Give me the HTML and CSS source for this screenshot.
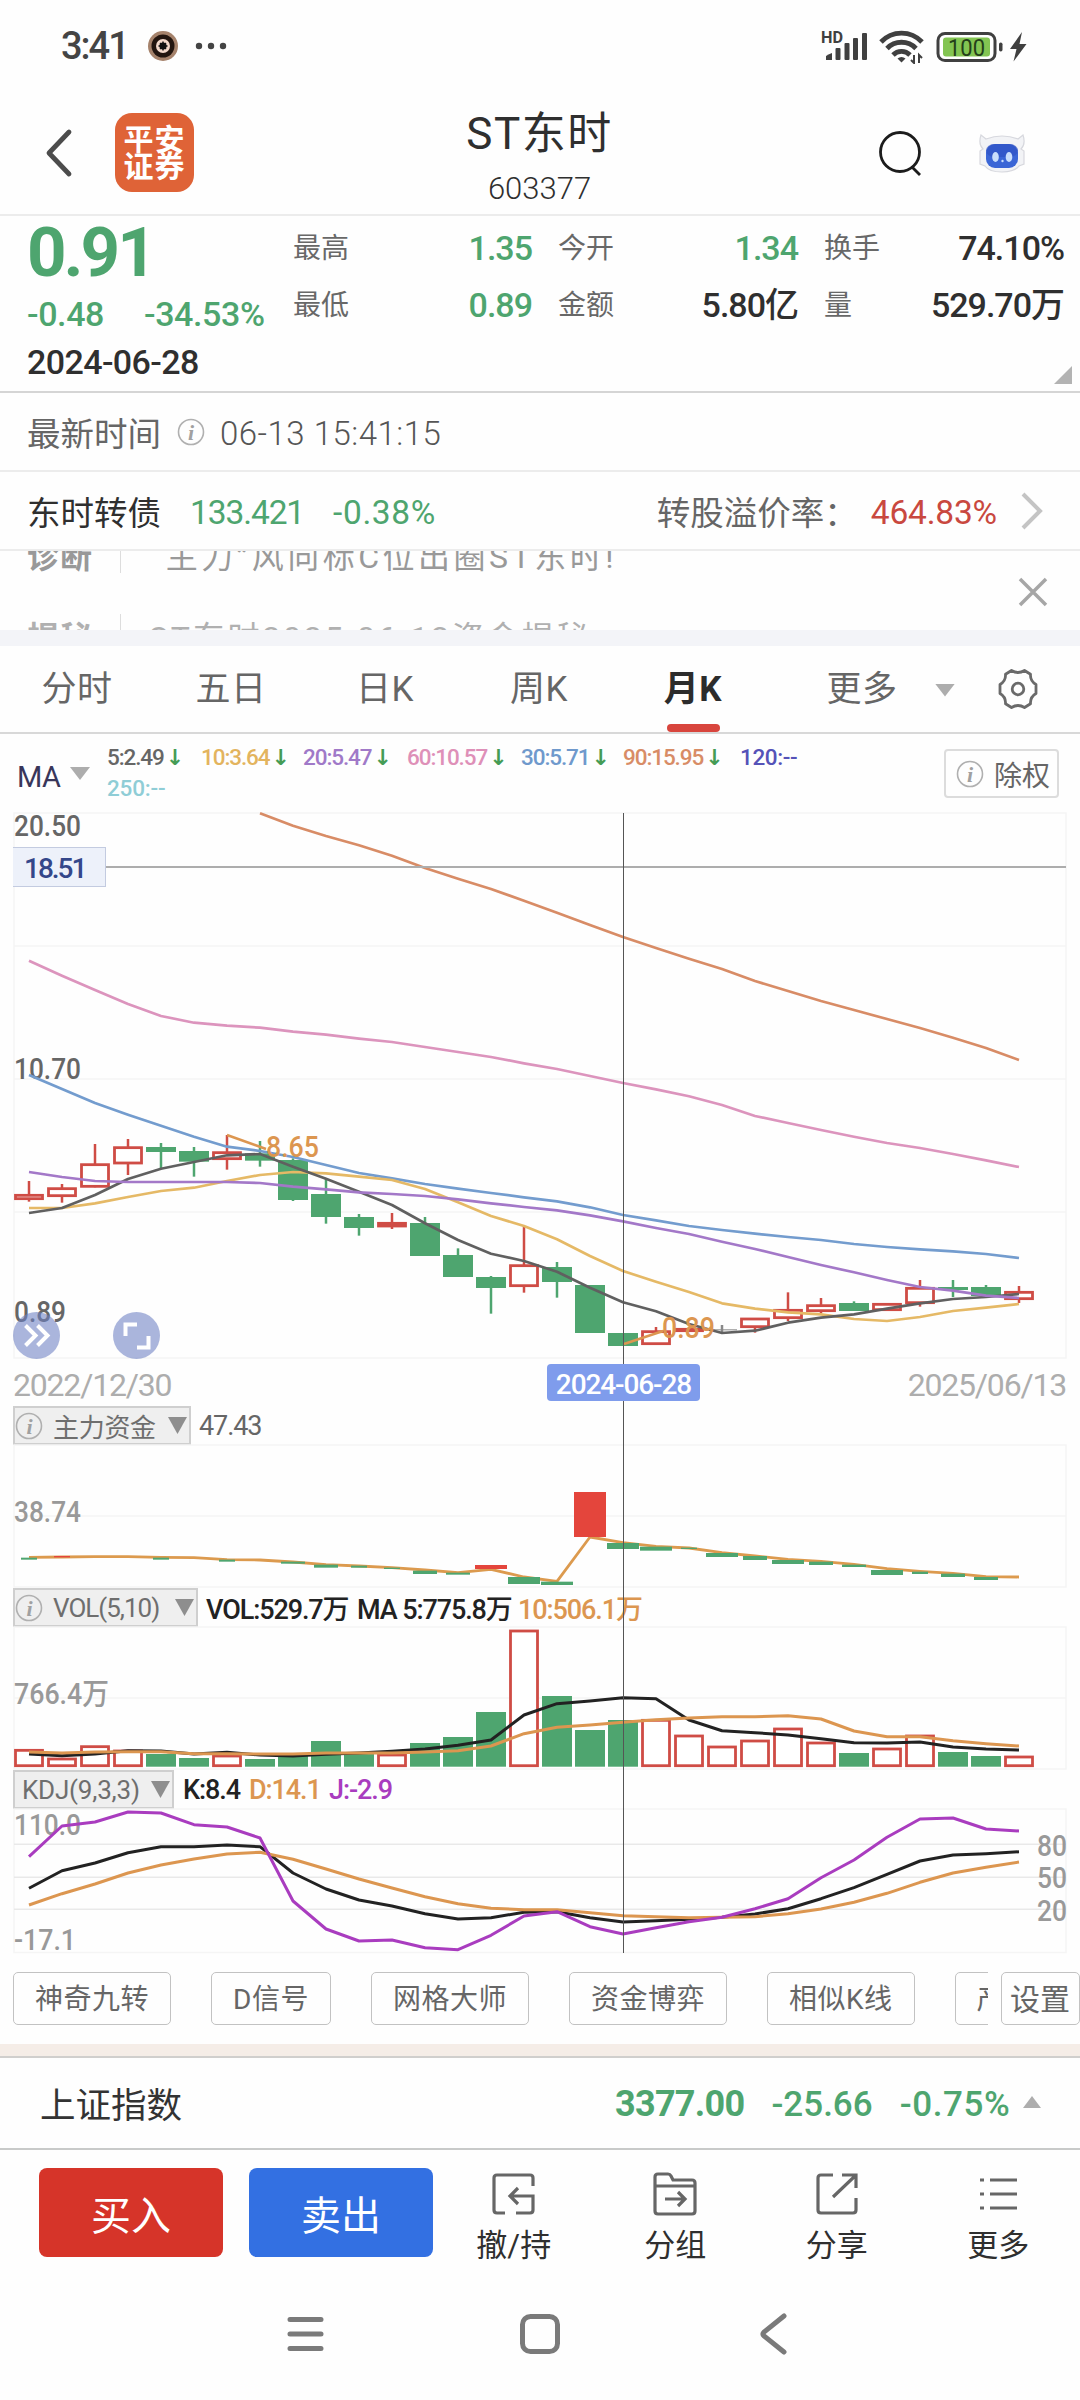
FILE: index.html
```html
<!DOCTYPE html>
<html lang="zh-CN">
  <head>
    <meta charset="utf-8" />
    <title>ST东时 603377</title>
    <link rel="stylesheet" href="styles.css">
  </head>
  <body>
    <!-- Status bar -->
    <div class="status-bar">
      <span class="clock">3:41</span>
      <svg class="status-app" width="30" height="30" viewBox="0 0 30 30">
        <circle cx="15" cy="15" r="15" fill="#a5826b" />
        <circle cx="15" cy="15" r="11.5" fill="#22150f" />
        <circle cx="15" cy="15" r="7" fill="#f3d9cb" />
        <circle cx="15" cy="15" r="3.6" fill="#111" />
        <path d="M15 10.5v9M10.5 15h9M12 12l6 6M18 12l-6 6" stroke="#111" stroke-width="1.4" />
      </svg>
      <svg class="status-dots" width="32" height="8" viewBox="0 0 32 8" fill="#444">
        <circle cx="4" cy="4" r="3.2" /><circle cx="16" cy="4" r="3.2" /><circle cx="28" cy="4" r="3.2" />
      </svg>
      <svg class="status-icons" width="212" height="36" viewBox="0 0 212 36">
        <text x="0" y="15" class="hd" textLength="22" lengthAdjust="spacingAndGlyphs">HD</text>
        <g fill="#404040">
          <path d="M5 28q3-2 6-3v7H5z" />
          <rect x="14.5" y="20" width="5" height="12" rx="1" />
          <rect x="23.5" y="15" width="5" height="17" rx="1" />
          <rect x="32" y="10" width="5" height="22" rx="1" />
          <rect x="41" y="5" width="5" height="27" rx="1" />
        </g>
        <g fill="none" stroke="#404040" stroke-width="4.8">
          <path d="M60 14a28 28 0 0 1 41 0" />
          <path d="M66 20.5a20 20 0 0 1 29 0" />
          <path d="M72 27a12 12 0 0 1 17 0" />
        </g>
        <path d="M80.500 34.500l-4-4a6 6 0 0 1 8 0z" fill="#404040" />
        <path d="M93 27v8l-3-3M98 35v-8l3 3" fill="none" stroke="#404040" stroke-width="2" />
        <rect x="117" y="5.500" width="57" height="27" rx="7" fill="#fff" stroke="#404040" stroke-width="3" />
        <rect x="122" y="9.500" width="47" height="19" rx="3" fill="#83c552" />
        <text x="127" y="27.5" class="battery-text" textLength="37" lengthAdjust="spacingAndGlyphs">100</text>
        <rect x="178" y="14.500" width="3.500" height="9" rx="1.700" fill="#404040" />
        <path d="M201 4l-12 17h6.500l-3 12.500L205.500 16h-7z" fill="#404040" />
      </svg>
    </div>

    <!-- Title bar -->
    <div class="title-bar">
      <svg class="back" width="30" height="50" viewBox="0 0 30 50">
        <path d="M26 4L6 25l20 21" fill="none" stroke="#4c4c4c" stroke-width="4.800" stroke-linecap="round" stroke-linejoin="round" />
      </svg>
      <div class="broker-logo"><span>平安</span><span>证券</span></div>
      <div class="title">
        <h1>ST东时</h1>
        <p>603377</p>
      </div>
      <svg class="search" width="44" height="48" viewBox="0 0 44 48" fill="none" stroke="#1c1c1c" stroke-width="2.800">
        <circle cx="22" cy="23" r="19.500" /><path d="M34 38l8 8" />
      </svg>
      <svg class="robot" width="48" height="40" viewBox="0 0 48 40">
        <path d="M3 2q-3 9 2 14L2 18v13l5 2q4 6 17 6t17-6l5-2V18l-3-2q5-5 2-14l-5 4q-8-3-16-3T8 6z" fill="#f2f3f6" stroke="#d7d8de" stroke-width="1.200" />
        <rect x="8" y="11" width="32" height="24" rx="9" fill="#3b66d6" />
        <rect x="8" y="11" width="32" height="13" rx="8" fill="#2f53c4" opacity=".7" />
        <ellipse cx="17.500" cy="24" rx="3.300" ry="5" fill="#c9defc" />
        <ellipse cx="31" cy="24" rx="3.300" ry="5" fill="#c9defc" />
        <circle cx="24.500" cy="28" r="1.200" fill="#c9defc" />
      </svg>
    </div>

    <!-- Quote summary -->
    <div class="quote">
      <div class="quote-main">
        <div class="price">0.91</div>
        <div class="change"><span>-0.48</span><span>-34.53%</span></div>
        <div class="quote-date">2024-06-28</div>
      </div>
      <dl class="quote-grid">
        <dt>最高</dt><dd class="green">1.35</dd>
        <dt>今开</dt><dd class="green">1.34</dd>
        <dt>换手</dt><dd>74.10%</dd>
        <dt>最低</dt><dd class="green">0.89</dd>
        <dt>金额</dt><dd>5.80亿</dd>
        <dt>量</dt><dd>529.70万</dd>
      </dl>
      <i class="corner"></i>
    </div>

    <div class="row time-row">
      <span class="row-label gray">最新时间</span>
      <svg class="info" width="28" height="28" viewBox="0 0 28 28"><circle cx="14" cy="14" r="12.500" /><text x="14" y="21.500">i</text></svg>
      <span class="row-time">06-13 15:41:15</span>
    </div>

    <div class="row bond-row">
      <span class="row-label">东时转债</span>
      <span class="row-num green bond-price">133.421</span>
      <span class="row-num green bond-pct">-0.38%</span>
      <span class="row-label gray premium">转股溢价率：</span>
      <span class="row-num red">464.83%</span>
      <svg class="arrow" width="24" height="40" viewBox="0 0 24 40"><path d="M3 3l17 17L3 37" fill="none" stroke="#c4c4c4" stroke-width="4" /></svg>
    </div>

    <!-- Rolling news, caught between two items -->
    <div class="ticker">
      <div class="ticker-list">
        <div class="ticker-item"><b>诊断</b><span class="quoted">“主力”风向标C位出圈ST东时!</span></div>
        <div class="ticker-item next"><b>揭秘</b><span>ST东时2025-06-12资金揭秘</span></div>
      </div>
      <svg class="close" width="30" height="30" viewBox="0 0 30 30"><path d="M2 2l26 26M28 2L2 28" stroke="#a6a6a6" stroke-width="3.500" /></svg>
    </div>

    <!-- Period tabs -->
    <div class="tabs">
      <span class="tab">分时</span>
      <span class="tab">五日</span>
      <span class="tab">日K</span>
      <span class="tab">周K</span>
      <span class="tab active">月K</span>
      <span class="tab more">更多</span>
      <i class="triangle"></i>
      <svg class="gear" width="40" height="42" viewBox="0 0 40 42" fill="none" stroke="#6a6a6a" stroke-width="2.800">
        <path d="M13.500 2.500q6.500 4 13 0l6 3.800q-.5 6.700 5.500 10.200v9q-6 3.500-5.500 10.200l-6 3.800q-6.500-4-13 0l-6-3.800Q8 29 2 25.500v-9Q8 13 7.500 6.300z" stroke-linejoin="round" />
        <circle cx="20" cy="21" r="5.800" />
      </svg>
    </div>

    <!-- MA legend -->
    <div class="ma-bar">
      <span class="ma-name">MA</span>
      <i class="triangle"></i>
      <div class="ma-list">
        <span class="ma5">5:2.49<b>↓</b></span>
        <span class="ma10">10:3.64<b>↓</b></span>
        <span class="ma20">20:5.47<b>↓</b></span>
        <span class="ma60">60:10.57<b>↓</b></span>
        <span class="ma30">30:5.71<b>↓</b></span>
        <span class="ma90">90:15.95<b>↓</b></span>
        <span class="ma120">120:--</span>
        <span class="ma250">250:--</span>
      </div>
      <span class="rights">
        <svg class="info" width="28" height="28" viewBox="0 0 28 28"><circle cx="14" cy="14" r="12.500" /><text x="14" y="21.500">i</text></svg>除权
      </span>
    </div>

    <!-- Charts -->
    <div class="charts">
      <svg id="kline" class="panel" width="1052" height="546"></svg>
      <div class="dates"><span>2022/12/30</span><span>2025/06/13</span></div>

      <div class="indicator">
        <span class="picker fund-picker">
          <svg class="info" width="28" height="28" viewBox="0 0 28 28"><circle cx="14" cy="14" r="12.500" /><text x="14" y="21.500">i</text></svg>
          <em>主力资金</em><i class="triangle"></i>
        </span>
        <span class="gray fund-value">47.43</span>
      </div>
      <svg id="fund" class="panel" width="1052" height="143"></svg>

      <div class="indicator">
        <span class="picker vol-picker">
          <svg class="info" width="28" height="28" viewBox="0 0 28 28"><circle cx="14" cy="14" r="12.500" /><text x="14" y="21.500">i</text></svg>
          <em>VOL(5,10)</em><i class="triangle"></i>
        </span>
        <span class="vol-now">VOL:529.7万</span><span class="vol-ma5">MA 5:775.8万</span><span class="orange">10:506.1万</span>
      </div>
      <svg id="vol" class="panel" width="1052" height="143"></svg>

      <div class="indicator">
        <span class="picker kdj-picker"><em>KDJ(9,3,3)</em><i class="triangle"></i></span>
        <span class="k">K:8.4</span><span class="d orange">D:14.1</span><span class="violet">J:-2.9</span>
      </div>
      <svg id="kdj" class="panel" width="1052" height="144"></svg>

      <div class="cross-x"></div>
      <div class="cross-y"></div>
      <div class="cross-price">18.51</div>
      <div class="cross-date">2024-06-28</div>
      <svg class="round-btn" width="47" height="47" viewBox="0 0 47 47">
        <circle cx="23.500" cy="23.500" r="23.500" fill="#6c80c3" opacity=".58" />
        <path d="M12.500 13.500l10 10-10 10M24.500 13.500l10 10-10 10" fill="none" stroke="#fff" stroke-width="4" />
      </svg>
      <svg class="round-btn full" width="47" height="47" viewBox="0 0 47 47">
        <circle cx="23.500" cy="23.500" r="23.500" fill="#6c80c3" opacity=".58" />
        <path d="M12.500 24V12.500H24M35.500 24v11.500H24" fill="none" stroke="#fff" stroke-width="4" />
      </svg>
    </div>

    <div class="chips">
      <div class="chip-list">
        <span class="chip">神奇九转</span>
        <span class="chip">D信号</span>
        <span class="chip">网格大师</span>
        <span class="chip">资金博弈</span>
        <span class="chip">相似K线</span>
        <span class="chip">产</span>
      </div>
      <span class="chip setting">设置</span>
    </div>

    <!-- Index bar -->
    <div class="index-bar">
      <span class="index-name">上证指数</span>
      <b>3377.00</b>
      <span class="index-num">-25.66</span>
      <span class="index-num pct">-0.75%</span>
      <i class="triangle up"></i>
    </div>

    <!-- Trade actions -->
    <div class="actions">
      <button class="btn buy">买入</button>
      <button class="btn sell">卖出</button>
      <div class="action">
        <svg width="44" height="44" viewBox="0 0 44 44"><path d="M41 14V6q0-3-3-3H5Q2 3 2 6v32q0 3 3 3h8M24 41h14q3 0 3-3V24H19M26 16l-8 8 8 8" /></svg>
        <span>撤/持</span>
      </div>
      <div class="action">
        <svg width="44" height="44" viewBox="0 0 44 44"><path d="M2 14V5q0-3 3-3h10q2 0 3 2l2 4h19q3 0 3 3v28q0 3-3 3H5q-3 0-3-3V14h40M12 27h19M25 20l7 7-7 7" /></svg>
        <span>分组</span>
      </div>
      <div class="action">
        <svg width="44" height="44" viewBox="0 0 44 44"><path d="M18 3H6Q3 3 3 6v32q0 3 3 3h32q3 0 3-3V26M27 3h14v13M40 4L18 25" /></svg>
        <span>分享</span>
      </div>
      <div class="action">
        <svg width="44" height="44" viewBox="0 0 44 44"><path d="M4 8h4M14 8h27M4 22h4M14 22h27M4 36h4M14 36h27" /></svg>
        <span>更多</span>
      </div>
    </div>

    <!-- System navigation -->
    <div class="nav">
      <svg width="42" height="42" viewBox="0 0 42 42"><path d="M6 6.500h31M6 21h31M6 35.500h31" /></svg>
      <svg width="42" height="42" viewBox="0 0 42 42"><rect x="3.500" y="3.500" width="35" height="35" rx="8" /></svg>
      <svg width="42" height="42" viewBox="0 0 42 42"><path d="M30 3L10 19q-2 2 0 4l20 16" /></svg>
    </div>

    <script src="chart.js"></script>
  </body>
</html>
```

FILE: styles.css
```css
* {
  margin: 0;
  padding: 0;
  box-sizing: border-box;
}

body {
  width: 1080px;
  height: 2400px;
  overflow: hidden;
  background: #fefefe;
  color: #2f2f2f;
  font-family: Roboto, "Noto Sans CJK SC", sans-serif;
}

svg {
  display: block;
  flex: none;
}

i, em {
  font-style: normal;
}

.green { color: #4ea56f; }
.red { color: #c9483f; }
.orange { color: #dc9650; }
.violet { color: #a93cbf; }
.gray { color: #666; }

.triangle {
  width: 20px;
  height: 13px;
  background: #adadad;
  clip-path: polygon(0 0, 100% 0, 50% 100%);
}

.triangle.up {
  clip-path: polygon(50% 0, 100% 100%, 0 100%);
}

.info circle {
  fill: none;
  stroke: #b0b0b0;
  stroke-width: 1.6;
}

.info text {
  font: italic bold 22px "Liberation Serif", serif;
  fill: #a0a0a0;
  text-anchor: middle;
}

/* status bar */
.status-bar {
  height: 92px;
  display: flex;
  align-items: center;
  padding-left: 61px;
}

.clock {
  font-size: 38px;
  font-weight: 500;
  letter-spacing: -2px;
  color: #444;
  width: 87px;
}

.status-dots { margin-left: 17px; }
.status-icons { margin-left: 594px; }

.hd {
  font: 700 16px Roboto, sans-serif;
  fill: #404040;
}

.battery-text {
  font: 400 24px Roboto, sans-serif;
  fill: #24401a;
}

/* title bar */
.title-bar {
  height: 124px;
  display: flex;
  align-items: center;
  padding: 0 54px 0 43px;
  border-bottom: 2px solid #ececec;
}

.broker-logo {
  margin: -1px 0 0 42px;
  width: 79px;
  height: 79px;
  padding-top: 1px;
  border-radius: 17px;
  background: #df6337;
  color: #fff;
  font-size: 30px;
  font-weight: 700;
  line-height: 27.5px;
  letter-spacing: 1px;
  display: flex;
  flex-direction: column;
  align-items: center;
  justify-content: center;
}

.title {
  flex: 1;
  text-align: center;
  padding: 16px 0 0 7px;
}

.title h1 {
  font-size: 44px;
  font-weight: 400;
  line-height: 56px;
  letter-spacing: 1.5px;
}

.title p {
  font-size: 31px;
  font-weight: 300;
  line-height: 54px;
}

.search { margin-right: 56px; }

/* quote */
.quote {
  position: relative;
  height: 177px;
  display: flex;
  border-bottom: 2px solid #d5d5d5;
}

.quote-main {
  width: 293px;
  padding-left: 27px;
  font-weight: 500;
}

.price {
  color: #4ea56f;
  font-size: 69px;
  font-weight: 700;
  line-height: 74px;
  letter-spacing: -3px;
}

.change {
  color: #4ea56f;
  font-size: 34px;
  line-height: 48px;
  display: flex;
  letter-spacing: -0.4px;
}

.change span:first-child {
  width: 117px;
}

.quote-date {
  font-size: 34px;
  line-height: 48px;
  letter-spacing: -0.6px;
}

.quote-grid {
  height: 118px;
  padding-top: 4px;
  display: grid;
  grid-template-columns: 80px 159px 106px 160px 106px 160px;
  grid-template-rows: 57px 57px;
  line-height: 57px;
}

.quote-grid dt {
  font-size: 28px;
  color: #686868;
}

.quote-grid dt:nth-of-type(3n + 2),
.quote-grid dt:nth-of-type(3n) {
  padding-left: 26px;
}

.quote-grid dd {
  font-size: 34px;
  font-weight: 500;
  text-align: right;
  letter-spacing: -1px;
  white-space: nowrap;
}

.corner {
  position: absolute;
  right: 8px;
  bottom: 7px;
  width: 18px;
  height: 18px;
  background: #b3b3b3;
  clip-path: polygon(100% 0, 100% 100%, 0 100%);
}

/* info rows */
.row {
  height: 79px;
  padding-left: 27px;
  display: flex;
  align-items: center;
  border-bottom: 2px solid #ececec;
  white-space: nowrap;
}

.row-label {
  font-size: 33.5px;
}

.time-row .info { margin: 0 15px 0 16px; }

.row-time {
  padding-top: 3px;
  font-size: 33px;
  font-weight: 300;
  letter-spacing: 0.5px;
  color: #555;
}

.row-num {
  padding-top: 4px;
  font-size: 33.5px;
  letter-spacing: -0.2px;
}

.bond-price {
  margin: 0 29px 0 29px;
  letter-spacing: -1.1px;
}

.bond-pct { letter-spacing: 0.6px; }

.premium {
  width: 214px;
  margin-left: 221px;
}

.arrow { margin-left: 23px; }

.ticker {
  height: 79px;
  position: relative;
  overflow: hidden;
  color: #999;
  font-size: 32px;
}

.ticker-list {
  margin-top: -18px;
}

.ticker-item {
  height: 81px;
  line-height: 48px;
  letter-spacing: 2.8px;
  white-space: nowrap;
  display: flex;
  align-items: flex-start;
  padding-left: 27px;
}

.ticker-item b {
  width: 94px;
  height: 40px;
  font-weight: 700;
  letter-spacing: 1px;
  border-right: 1px solid #ddd;
}

.ticker-item span {
  margin-left: 28px;
}

.ticker-item .quoted {
  margin-left: 30px;
  letter-spacing: 3.5px;
}

.ticker-item.next { color: #b0b0b0; }

.close {
  position: absolute;
  right: 32px;
  top: 26px;
}

/* tabs */
.tabs {
  height: 104px;
  border-top: 16px solid #f3f4f8;
  border-bottom: 2px solid #d8d8d8;
  display: flex;
  align-items: center;
}

.tab {
  width: 154px;
  height: 86px;
  line-height: 88px;
  text-align: center;
  font-size: 35px;
  letter-spacing: 0.5px;
  color: #666;
}

.tab.active {
  color: #2c2c2c;
  font-weight: 700;
  display: flex;
  flex-direction: column;
  align-items: center;
}

.tab.active::after {
  content: "";
  flex: none;
  width: 53px;
  height: 8px;
  margin-top: -10px;
  border-radius: 4px;
  background: #d8453d;
}

.tab.more {
  width: 184px;
}

.tabs .triangle {
  margin: 2px 43px 0 -19px;
}

/* MA legend */
.ma-bar {
  height: 79px;
  display: flex;
  padding-left: 17px;
}

.ma-name {
  width: 53px;
  font-size: 29px;
  line-height: 86px;
  letter-spacing: -0.5px;
  color: #39365a;
}

.ma-bar .triangle {
  margin-top: 33px;
}

.ma-list {
  margin: 8px 0 0 17px;
  width: 837px;
  display: grid;
  grid-template-columns: 94px 102px 104px 114px 102px 117px 80px;
  grid-auto-rows: 31px;
  align-content: start;
  font-size: 22.5px;
  font-weight: 500;
  line-height: 31px;
  letter-spacing: -1.1px;
}

.ma-list b {
  margin-left: 2px;
  font-family: "DejaVu Sans", sans-serif;
  font-size: 22px;
  line-height: 20px;
  color: #459c55;
}

.ma5 { color: #666; }
.ma10 { color: #e3b45e; }
.ma20 { color: #a079c8; }
.ma60 { color: #de90b8; }
.ma30 { color: #6f99cc; }
.ma90 { color: #d88c66; }
.ma120 { color: #5552b8; letter-spacing: -0.4px; }
.ma250 { color: #8fcdd6; letter-spacing: -0.2px; }

.rights {
  width: 115px;
  height: 49px;
  margin-top: 15px;
  padding-left: 10px;
  display: flex;
  align-items: center;
  gap: 10px;
  border: 2px solid #dcdcdc;
  border-radius: 4px;
  font-size: 28px;
  color: #666;
  white-space: nowrap;
}

/* charts */
.charts {
  position: relative;
  height: 1140px;
  padding-left: 14px;
}

.panel {
  overflow: visible;
}

.panel text {
  font: 500 30px Roboto, "Noto Sans CJK SC", sans-serif;
}

.dates {
  height: 47px;
  width: 1053px;
  margin-left: -1px;
  display: flex;
  justify-content: space-between;
  font-size: 32px;
  line-height: 53px;
  letter-spacing: -1.2px;
  color: #adadad;
}

.indicator {
  height: 39px;
  margin-left: -1px;
  display: flex;
  align-items: center;
  font-size: 27px;
  font-weight: 500;
  letter-spacing: -1.1px;
  white-space: nowrap;
  color: #222;
}

.picker {
  height: 39px;
  padding: 0 2px 0 0;
  display: flex;
  align-items: center;
  border: 2px solid #cfcfcf;
  background: #efefef;
  color: #6e6e6e;
  font-weight: 400;
}

.picker em {
  flex: 1;
  padding-left: 10px;
  font-size: 26px;
  letter-spacing: -0.3px;
}

.picker .triangle {
  width: 19px;
  height: 17px;
  background: #8e8e8e;
}

.fund-picker { width: 178px; }
.vol-picker { width: 185px; }
.vol-picker em { letter-spacing: -1px; }
.kdj-picker { width: 161px; }
.kdj-picker em { padding-left: 7px; letter-spacing: -0.2px; }

.indicator .gray { color: #666; font-weight: 400; }
.indicator .orange { color: #dc9650; }
.indicator .violet { color: #a93cbf; }

.fund-value { margin-left: 8px; }

.vol-now {
  margin-left: 8px;
  width: 151px;
}

.vol-ma5 { width: 161px; }

.k {
  margin-left: 9px;
  width: 66px;
}

.d { width: 80px; }

.cross-x,
.cross-y,
.cross-price,
.cross-date,
.round-btn {
  position: absolute;
}

.cross-x {
  left: 106px;
  top: 53px;
  width: 960px;
  height: 2px;
  background: #adadad;
}

.cross-y {
  left: 623px;
  top: 0;
  width: 1px;
  height: 1140px;
  background: #555;
}

.cross-price {
  left: 13px;
  top: 34px;
  width: 93px;
  height: 40px;
  line-height: 41px;
  padding-left: 11px;
  background: #edf1fa;
  border: 1px solid #c3cbe0;
  border-left: 0;
  font-size: 28px;
  color: #34478a;
  font-weight: 500;
  letter-spacing: -2px;
}

.cross-date {
  left: 547px;
  top: 551px;
  width: 153px;
  height: 37px;
  border-radius: 4px;
  background: #7f9cec;
  color: #fff;
  font-size: 28px;
  line-height: 41px;
  font-weight: 500;
  text-align: center;
  letter-spacing: -1.1px;
}

.round-btn {
  left: 13px;
  top: 499px;
}

.round-btn.full { left: 113px; }

/* feature chips */
.chips {
  height: 91px;
  padding: 19px 0 0 13px;
  display: flex;
}

.chip-list {
  width: 975px;
  display: flex;
  gap: 40px;
  overflow: hidden;
}

.chip {
  flex: none;
  height: 53px;
  line-height: 53px;
  padding: 0 21px;
  border: 1px solid #c2c2c2;
  border-radius: 5px;
  font-size: 28px;
  color: #666;
  letter-spacing: 0.5px;
}

.chip.setting {
  width: 79px;
  margin-left: 13px;
  padding: 0 8px;
  font-size: 30px;
  letter-spacing: 0;
}

/* index bar */
.index-bar {
  height: 106px;
  border-top: 12px solid #f5ede7;
  border-bottom: 2px solid #c8cac9;
  box-shadow: inset 0 2px #d0cfcd;
  padding: 0 39px 0 40px;
  display: flex;
  align-items: center;
  font-size: 36px;
  color: #4ea56f;
}

.index-name {
  font-size: 35.5px;
  color: #333;
  width: 575px;
}

.index-bar b {
  padding-top: 4px;
  letter-spacing: -0.7px;
}

.index-num {
  padding-top: 4px;
  font-weight: 500;
  font-size: 35px;
  margin-left: 27px;
}

.index-num.pct {
  letter-spacing: 0.6px;
}

.index-bar .triangle {
  width: 18px;
  height: 12px;
  margin-left: auto;
}

/* actions */
.actions {
  height: 136px;
  display: flex;
  padding: 18px 0 0 39px;
}

.btn {
  width: 184px;
  height: 89px;
  margin-right: 26px;
  border: none;
  border-radius: 8px;
  color: #fff;
  font: 40px Roboto, "Noto Sans CJK SC", sans-serif;
}

.buy { background: #d63429; }

.sell {
  background: #3370e2;
  margin-right: 0;
}

.action {
  width: 161.5px;
  display: flex;
  flex-direction: column;
  align-items: center;
  font-size: 31px;
  line-height: 40px;
}

.action svg {
  margin: 4px 0 10px;
  fill: none;
  stroke: #666;
  stroke-width: 3.2;
}

/* system navigation */
.nav {
  height: 96px;
  display: flex;
  align-items: center;
  justify-content: center;
  gap: 193px;
}

.nav svg {
  fill: none;
  stroke: #7a7a7a;
  stroke-width: 5;
  stroke-linecap: round;
}
```

FILE: chart.js
```js
// All y values are stored in thirds of a pixel, one entry per month.
const STEP = 33;
const FIRST = 15;
const GREEN = '#4ea56f';
const RED = '#cf4c45';

const x = i => FIRST + i * STEP;

// [direction, high, body top, body bottom, low]
const candles = [
  ['r', 393, 433, 449, 455], ['r', 402, 413, 440, 458], ['r', 282, 341, 412, 412],
  ['r', 267, 290, 342, 375], ['g', 279, 291, 306, 355], ['g', 291, 303, 335, 380],
  ['r', 255, 305, 329, 359], ['g', 273, 310, 332, 350], ['g', 325, 330, 450, 453],
  ['g', 384, 432, 501, 521], ['g', 492, 501, 534, 557], ['r', 489, 517, 531, 537],
  ['g', 501, 519, 618, 618], ['g', 595, 615, 681, 681], ['g', 678, 681, 714, 791],
  ['r', 530, 644, 710, 728], ['g', 636, 651, 696, 743], ['g', 705, 705, 849, 849],
  ['g', 849, 849, 888, 888], ['r', 831, 842, 884, 884], ['r', 833, 835, 845, 846],
  ['n', 825, 838, 841, 850], ['r', 804, 804, 833, 848], ['r', 727, 778, 806, 813],
  ['r', 744, 764, 785, 790], ['g', 754, 759, 783, 783], ['r', 760, 760, 782, 782],
  ['r', 690, 712, 761, 770], ['g', 690, 711, 720, 741], ['g', 705, 711, 738, 738],
  ['r', 708, 724, 749, 759]
];

const ma = {
  ma5: [489, 474, 435, 387, 356, 336, 316, 312, 350, 386, 425, 465, 520, 570, 611, 633, 665, 713, 757, 784, 822, 849, 842, 818, 803, 793, 776, 760, 747, 741, 732],
  ma10: [474, 474, 460, 441, 423, 413, 393, 375, 366, 370, 380, 390, 417, 457, 498, 528, 568, 618, 663, 695, 726, 760, 776, 787, 793, 807, 813, 801, 783, 773, 762],
  ma20: [366, 381, 393, 396, 396, 396, 396, 399, 410, 418, 427, 432, 438, 448, 460, 471, 481, 496, 514, 534, 552, 575, 597, 621, 645, 667, 690, 711, 722, 737, 744],
  ma30: [75, 117, 159, 194, 227, 260, 290, 303, 321, 345, 369, 385, 402, 416, 429, 442, 454, 472, 495, 511, 528, 540, 551, 561, 570, 582, 591, 598, 604, 612, 624],
  ma60: [-268, -223, -180, -138, -102, -82, -73, -67, -55, -46, -34, -24, -9, 6, 21, 40, 57, 78, 99, 118, 139, 165, 198, 219, 240, 260, 279, 294, 312, 331, 351]
};
const ma90 = [-710, -673, -642, -614, -583, -546, -514, -483, -448, -412, -375, -339, -306, -274, -243, -207, -177, -147, -120, -93, -66, -37, -6, 30];

// [index, colour, top, bottom, width]
const fundBars = [
  [0, 'g', 353, 359, 16], [1, 'r', 348, 352, 16], [4, 'g', 353, 359, 16], [6, 'g', 359, 365, 16],
  [8, 'g', 365, 371, 24], [9, 'g', 374, 383, 24], [10, 'g', 377, 383, 16], [11, 'g', 383, 387, 16],
  [12, 'g', 392, 402, 24], [13, 'g', 398, 404, 24], [14, 'r', 375, 387, 32], [15, 'g', 411, 432, 32],
  [16, 'g', 425, 435, 32], [17, 'r', 156, 291, 32], [18, 'g', 309, 327, 32], [19, 'g', 320, 332, 32],
  [20, 'g', 323, 327, 16], [21, 'g', 339, 351, 32], [22, 'g', 348, 360, 24], [23, 'g', 360, 372, 32],
  [24, 'g', 365, 375, 24], [25, 'g', 374, 381, 24], [26, 'g', 390, 405, 32], [27, 'g', 395, 402, 16],
  [28, 'g', 401, 411, 24], [29, 'g', 411, 420, 24]
];
const fundLine = [352, 351, 350, 350, 352, 353, 359, 360, 366, 374, 378, 383, 390, 398, 388, 411, 424, 291, 308, 319, 324, 338, 348, 358, 364, 373, 386, 394, 400, 410, 411];

const volTops = [928, 954, 917, 930, 942, 954, 945, 957, 945, 903, 942, 942, 909, 891, 816, 570, 768, 870, 840, 838, 885, 918, 900, 864, 906, 939, 924, 885, 936, 948, 948];
const volUp = 'rrrrggrggggrgggrgggrrrrrrgrrggr';
const volMa5 = [942, 947, 942, 932, 933, 942, 937, 945, 948, 943, 939, 934, 927, 916, 900, 825, 791, 783, 773, 776, 840, 872, 878, 885, 896, 908, 909, 906, 921, 927, 930];
const volMa10 = [936, 939, 936, 935, 935, 941, 941, 942, 942, 939, 939, 939, 936, 932, 918, 881, 862, 855, 847, 839, 834, 830, 830, 827, 837, 873, 890, 890, 902, 911, 918];

const k = [355, 302, 279, 248, 230, 230, 225, 230, 309, 357, 390, 408, 431, 447, 443, 427, 425, 443, 456, 452, 448, 442, 432, 416, 386, 353, 313, 273, 255, 251, 245];
const d = [405, 371, 342, 309, 285, 267, 252, 247, 268, 297, 327, 354, 380, 401, 415, 419, 419, 428, 437, 440, 443, 442, 440, 431, 417, 397, 370, 337, 309, 292, 276];
const j = [260, 168, 156, 126, 129, 164, 171, 204, 393, 477, 513, 510, 533, 539, 496, 438, 425, 470, 492, 473, 455, 442, 416, 386, 323, 270, 202, 147, 144, 177, 183];

function line(values, offset, color, width, start = 0) {
  const points = values.map((v, i) => `${x(i + start)},${(v / 3 + offset).toFixed(1)}`).join(' ');
  return `<polyline points="${points}" fill="none" stroke="${color}" stroke-width="${width}" stroke-linejoin="round"/>`;
}

function frame(height, grid, color = '#f5f5f5') {
  return `<rect x="0" y="0" width="1052" height="${height}" fill="none" stroke="#f5f5f5" stroke-width="1.5"/>` +
    grid.map(y => `<path d="M0 ${y}H1052" stroke="${color}" stroke-width="1.5"/>`).join('');
}

function label(text, left, baseline, width, color) {
  return `<text x="${left}" y="${baseline}" textLength="${width}" lengthAdjust="spacingAndGlyphs" fill="${color}">${text}</text>`;
}

function rect(cx, top, bottom, width, color) {
  return `<rect x="${cx - width / 2}" y="${top}" width="${width}" height="${bottom - top}" fill="${color}"/>`;
}

function hollow(cx, top, bottom) {
  return `<rect x="${cx - 13.5}" y="${top + 1}" width="27" height="${Math.max(bottom - top - 2, 1)}" fill="#fff" stroke="${RED}" stroke-width="2.8"/>`;
}

function drawKline() {
  const off = 237;
  let out = frame(545, [133, 266, 399]);
  out += label('20.50', 0, 23, 67, '#666') + label('10.70', 0, 265.5, 67, '#666') + label('0.89', 0, 509, 52, '#666');
  candles.forEach(([type, high, top, bottom, low], i) => {
    const color = type === 'g' ? GREEN : type === 'r' ? RED : '#888';
    const [h, t, b, l] = [high, top, bottom, low].map(v => v / 3 + off);
    out += `<path d="M${x(i)} ${h}V${l}" stroke="${color}" stroke-width="2.5"/>`;
    out += type === 'r' ? hollow(x(i), t, b) : rect(x(i), t, b, 30, color);
  });
  out += line(ma90, off, '#d88c66', 2.7, 7);
  out += line(ma.ma60, off, '#dc94bd', 2.7);
  out += line(ma.ma30, off, '#739cce', 2.7);
  out += line(ma.ma10, off, '#e5b966', 2.7);
  out += line(ma.ma5, off, '#606060', 2.7);
  out += line(ma.ma20, off, '#a378c8', 2.7);
  out += '<path d="M213 322l39 14M610 531l39-13" stroke="#dc9650" stroke-width="2.500" fill="none"/>';
  out += label('8.65', 252, 344, 53, '#dc9650') + label('0.89', 648, 525, 53, '#dc9650');
  document.getElementById('kline').innerHTML = out;
}

function drawFund() {
  const off = -5;
  let out = frame(142, [71]) + label('38.74', 0, 77, 67, '#999');
  out += line(fundLine, off, '#dc9a4e', 2.8);
  fundBars.forEach(([i, type, top, bottom, width]) => {
    out += rect(x(i), top / 3 + off, bottom / 3 + off, width, type === 'g' ? GREEN : '#e4453c');
  });
  document.getElementById('fund').innerHTML = out;
}

function drawVol() {
  const off = -187;
  const base = 139.7;
  let out = frame(142, [71]) + label('766.4万', 0, 77, 95, '#999');
  volTops.forEach((v, i) => {
    out += volUp[i] === 'r' ? hollow(x(i), v / 3 + off, base) : rect(x(i), v / 3 + off, base, 30, GREEN);
  });
  out += line(volMa5, off, '#222', 3) + line(volMa10, off, '#dc9650', 3);
  document.getElementById('vol').innerHTML = out;
}

function drawKdj() {
  const off = -39;
  let out = frame(143.5, [35.3, 68.3, 100.3], '#e9e9e9');
  out += label('110.0', 0, 26, 67, '#999') + label('-17.1', 0, 141, 62, '#999');
  out += label('80', 1023, 46.5, 30, '#999') + label('50', 1023, 79, 30, '#999') + label('20', 1023, 112, 30, '#999');
  out += line(k, off, '#222', 3) + line(d, off, '#dc9650', 3) + line(j, off, '#a93cbf', 3);
  document.getElementById('kdj').innerHTML = out;
}

drawKline();
drawFund();
drawVol();
drawKdj();
```
